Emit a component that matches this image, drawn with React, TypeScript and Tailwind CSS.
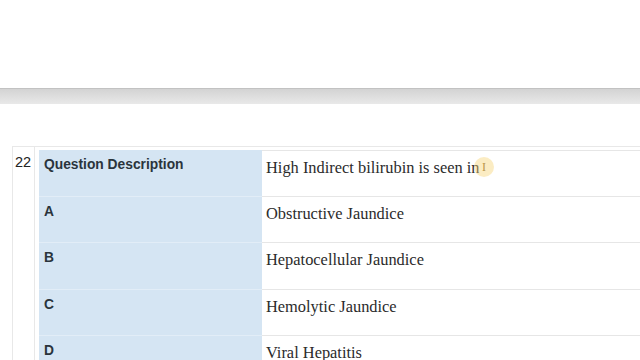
import React from "react";

const rows = [
  { label: "Question Description", value: "High Indirect bilirubin is seen in" },
  { label: "A", value: "Obstructive Jaundice" },
  { label: "B", value: "Hepatocellular Jaundice" },
  { label: "C", value: "Hemolytic Jaundice" },
  { label: "D", value: "Viral Hepatitis" },
];

export default function App() {
  return (
    <div className="relative h-[360px] w-[640px] overflow-hidden bg-white font-['Liberation_Sans',Arial,sans-serif] text-[#333]">
      <div className="h-[88px]" />
      <div className="h-[16px] border-t border-[#c2c2c2] bg-gradient-to-b from-[#d3d3d3] to-[#e9e9e9]" />
      <div className="h-[42px]" />

      <div className="ml-[12px] flex border-l border-t border-[#e8e8e8]">
        <div className="w-[22px] shrink-0 border-r border-[#e8e8e8] pl-[2px] pt-[5px] text-[14.5px] leading-[20px] text-[#222]">22</div>
        <div className="flex-1 pl-[4px] pt-[3px]">
          {rows.map((row, i) => (
            <div key={row.label} className="flex h-[46.5px]">
              <div className="w-[223px] shrink-0 border-b border-[#e2edf7] bg-[#d5e5f3] px-[5px] pt-[5px] text-[13.8px] font-bold leading-[19px] text-[#2a343c]">
                {row.label}
              </div>
              <div
                className={`flex-1 border-b border-[#e6e6e6] pl-[4px] pt-[5px] font-['Liberation_Serif','Times_New_Roman',serif] text-[16.4px] leading-[24px] text-[#2b2b2b] ${
                  i === 0 ? "border-t" : ""
                }`}
              >
                {row.value}
              </div>
            </div>
          ))}
        </div>
      </div>

      {/* cursor highlight */}
      <div className="absolute left-[474px] top-[157px] flex h-[20px] w-[20px] items-center justify-center rounded-full bg-[#f7d57a]/45">
        <span className="font-['Liberation_Serif',serif] text-[12px] leading-none text-[#b8954a]">I</span>
      </div>
    </div>
  );
}
